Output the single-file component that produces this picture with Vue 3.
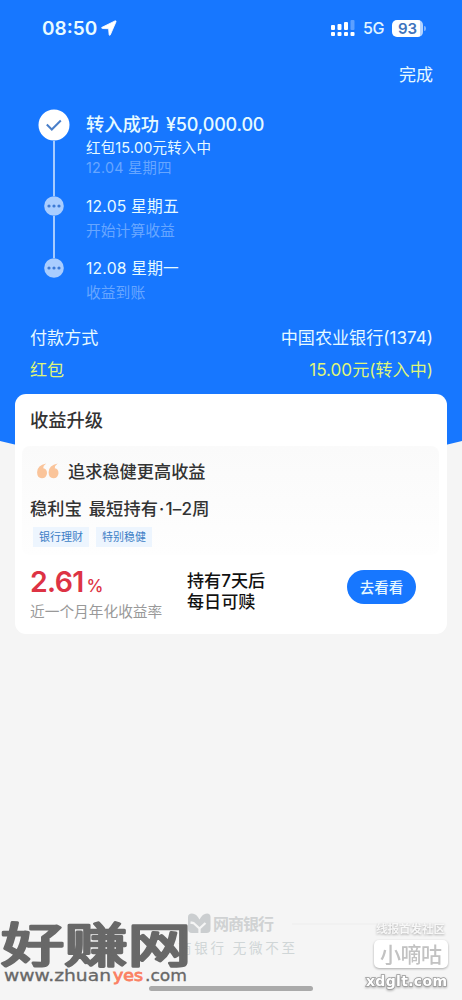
<script setup>
const steps = [
  { date: '12.05 星期五', note: '开始计算收益' },
  { date: '12.08 星期一', note: '收益到账' }
]
const tags = ['银行理财', '特别稳健']
</script>

<template>
  <main class="page">
    <section class="hero">
      <header class="status">
        <span class="time">08:50</span>
        <svg class="location" viewBox="0 0 16 16"><path d="M1 7.300 14 .9q1.300-.4 1 .9L9.300 14.900q-.8 1.100-1.200-.3L7.600 8.700 1.500 8.500Q-.1 8.100 1 7.300Z" fill="#fff" stroke="#fff" stroke-width=".8" /></svg>
        <svg class="signal" viewBox="0 0 24 17">
          <g fill="#fff">
            <rect x="0" y="5" width="4" height="5" rx="1" /><rect x="6.5" y="4" width="4" height="6" rx="1" />
            <rect x="13" y="2" width="4" height="8" rx="1" /><rect x="19.5" y="0" width="4" height="10" rx="1" opacity=".3" />
            <rect x="0" y="12" width="4" height="4" rx="1" /><rect x="6.5" y="12" width="4" height="4" rx="1" />
            <rect x="13" y="12" width="4" height="4" rx="1" /><rect x="19.5" y="12" width="4" height="4" rx="1" />
          </g>
        </svg>
        <span class="network">5G</span>
        <span class="battery">93</span>
        <i class="cap"></i>
      </header>
      <div class="done">完成</div>
      <div class="timeline">
        <div class="step first">
          <div class="rail">
            <svg class="check" viewBox="0 0 32 32"><circle cx="16" cy="16" r="15.5" fill="#fff" /><path d="m8.800 15.500 5 5 9-9" fill="none" stroke="#4a7fc9" stroke-width="2" /></svg>
            <i class="line"></i>
          </div>
          <div class="info">
            <div class="success">转入成功 <b>¥50,000.00</b></div>
            <div class="bonus">红包15.00元转入中</div>
            <div class="start">12.04 星期四</div>
          </div>
        </div>
        <div v-for="(s, i) in steps" :key="s.date" class="step">
          <div class="rail">
            <svg class="dots" viewBox="0 0 20 20"><circle cx="10" cy="10" r="9.8" fill="#a9cdff" /><g fill="#3c7ad6"><circle cx="5" cy="10" r="1.6" /><circle cx="10" cy="10" r="1.6" /><circle cx="15" cy="10" r="1.6" /></g></svg>
            <i v-if="i === 0" class="line"></i>
          </div>
          <div class="info">
            <div class="date">{{ s.date }}</div>
            <div class="note">{{ s.note }}</div>
          </div>
        </div>
      </div>
      <div class="pay"><span>付款方式</span><span class="value">中国农业银行(1374)</span></div>
      <div class="pay yellow"><span>红包</span><span class="value">15.00元(转入中)</span></div>
    </section>

    <section class="card">
      <h2>收益升级</h2>
      <div class="panel">
        <div class="quote">
          <svg viewBox="0 0 22 16"><g fill="#fac49a"><path d="M9.200.6Q6.600 2.300 6.300 5.200 10 5.700 10 10.300 9.500 15.300 4.900 15.300.1 15 .1 9.200.3 2.300 9.200.6Z" /><path d="M20.700.6Q18.100 2.300 17.800 5.200 21.500 5.700 21.500 10.300 21 15.300 16.400 15.300 11.600 15 11.600 9.200 11.800 2.300 20.700.6Z" /></g></svg>
          <span>追求稳健更高收益</span>
        </div>
        <div class="product">稳利宝 最短持有<i>·</i>1–2周</div>
        <div class="tags"><span v-for="t in tags" :key="t">{{ t }}</span></div>
      </div>
      <div class="offer">
        <div class="yield">
          <div class="rate">2.61<small>%</small></div>
          <div class="caption">近一个月年化收益率</div>
        </div>
        <div class="terms">持有7天后<br />每日可赎</div>
        <button>去看看</button>
      </div>
    </section>

    <footer>
      <svg viewBox="0 0 462 100">
        <g>
          <path d="M188 17q0-3.500 4-3.500 4.500 0 7.500 6 3-6 7.500-6 3.500 0 3.500 3.500v12q0 4-4 4h-14.500q-4 0-4-4z" fill="#cbced0" />
          <path d="m190.500 22.500 3 .5 6 5.500 6-5.500M199.500 28v6" fill="none" stroke="#f5f5f5" stroke-width="2.300" />
          <text x="213" y="30" font-size="16" font-weight="600" textLength="61" fill="#d0d2d3">网商银行</text>
          <text x="178" y="53" font-size="13.500" textLength="117" fill="#d0d6d7">商银行 无微不至</text>
          <path d="M292 24H435" stroke="#ededed" />
        </g>
        <rect x="149" y="86" width="164" height="5" rx="2.500" fill="#aaa" />
        <g fill="#686868">
          <text class="brand" transform="translate(1 61.500) scale(1 .77)" font-size="60" textLength="190" lengthAdjust="spacingAndGlyphs">好赚网</text>
          <g class="site">
            <text x="4" y="81" textLength="107" lengthAdjust="spacingAndGlyphs">www.zhuan</text>
            <text class="accent" x="113" y="81" textLength="30" lengthAdjust="spacingAndGlyphs" fill="#fb8063">yes</text>
            <text x="145" y="81" textLength="42" lengthAdjust="spacingAndGlyphs">.com</text>
          </g>
        </g>
        <g class="community">
          <text x="376" y="33" font-size="11.500" font-weight="700" textLength="69" fill="#f7f7f7">线报首发社区</text>
          <rect x="374" y="40" width="74" height="28" rx="5" fill="#fff" />
          <text x="380" y="62" font-size="21" font-weight="500" textLength="62" fill="#c2c2c2">小嘀咕</text>
          <text class="domain" x="366" y="86" textLength="81" fill="#fff">xdglt.com</text>
        </g>
      </svg>
    </footer>
  </main>
</template>

<style>
body { margin: 0; background: #f5f5f5; }
</style>
<style scoped>
* { box-sizing: border-box; }
.page { width: 462px; height: 1000px; overflow: hidden; display: flex; flex-direction: column; background: #f5f5f5; font-family: Inter, "Noto Sans CJK SC", sans-serif; color: #333; white-space: nowrap; }
.hero { height: 470px; flex: none; background: #1777ff; clip-path: path("M0 0H462V441Q231 500 0 441Z"); color: #e6faff; }
.status { height: 56px; display: flex; align-items: center; padding: 0 36px 0 42px; color: #fff; }
.time { font-size: 19px; font-weight: 600; width: 55px; color: #e9fbff; }
.location { width: 16px; height: 16px; margin-left: 4px; }
.signal { width: 24px; height: 17px; margin-left: auto; margin-right: -1px; }
.network { font-size: 16px; font-weight: 500; margin-left: 9px; width: 21px; letter-spacing: -.3px; color: #e1f5ff; }
.battery { width: 31px; height: 17px; margin-left: 8px; border-radius: 5px; background: linear-gradient(90deg, #fff 90%, #b4d4ff 90%); color: #3d73bd; font-size: 15px; font-weight: 600; line-height: 17px; text-align: center; }
.cap { width: 2px; height: 5px; margin-left: 1px; border-radius: 0 2px 2px 0; background: #7fb3ff; }
.done { height: 38px; line-height: 39px; padding-right: 29px; text-align: right; font-size: 17px; }
.timeline { padding: 15px 0 0 38px; }
.step { display: flex; height: 62.500px; }
.step.first { height: 86.500px; }
.rail { width: 32px; display: flex; flex-direction: column; align-items: center; }
.check { width: 32px; height: 32px; flex: none; }
.dots { width: 20px; height: 20px; flex: none; }
.line { width: 1.500px; flex: 1; background: #a6cbff; }
.info { margin-left: 16px; }
.success { height: 31px; line-height: 31px; font-size: 18.300px; font-weight: 500; }
.success b { font-weight: 500; font-size: 18px; margin-left: 2px; letter-spacing: -.15px; }
.bonus { height: 16px; line-height: 16px; font-size: 14.500px; letter-spacing: .15px; }
.start { height: 24px; line-height: 24px; font-size: 14.300px; letter-spacing: .25px; color: #67a6ff; }
.date { height: 22px; line-height: 22px; font-size: 15.700px; font-weight: 400; letter-spacing: .2px; }
.note { height: 26px; line-height: 27px; font-size: 14.800px; color: #67a6ff; }
.pay { height: 32px; line-height: 34px; display: flex; justify-content: space-between; padding: 0 29px 0 30px; font-size: 17.100px; }
.yellow { color: #dff57a; }
.card { position: relative; width: 432px; height: 240px; flex: none; margin: -76px 0 0 15px; border-radius: 11px; background: #fff; }
h2 { margin: 0; height: 52px; padding-left: 15px; font-size: 18.300px; font-weight: 500; line-height: 52px; }
.panel { margin: 0 8px 0 7px; height: 109px; border-radius: 8px; background: linear-gradient(#fafafa, #fefefe); }
.quote { height: 49px; display: flex; align-items: center; padding-left: 15px; font-size: 17.200px; font-weight: 500; }
.quote svg { width: 22px; height: 16px; margin-right: 9px; }
.product { height: 27px; line-height: 27px; padding-left: 8px; font-size: 17.200px; font-weight: 500; word-spacing: 2px; letter-spacing: .15px; }
.product i { font-style: normal; margin: 0 1px; }
.tags { display: flex; gap: 7px; padding: 5px 0 0 11px; }
.tags span { width: 56px; height: 20px; background: #edf5fe; color: #3e7fc6; text-align: center; line-height: 20px; font-size: 11px; }
.offer { height: 79px; display: flex; padding-left: 15px; }
.yield { width: 157px; padding-top: 8px; }
.rate { height: 36px; line-height: 37px; color: #dd3344; font-size: 28.500px; font-weight: 600; letter-spacing: -.7px; }
.rate small { font-size: 17px; font-weight: 500; margin-left: 3px; }
.caption { height: 26px; line-height: 27px; font-size: 14.700px; color: #999; }
.terms { padding-top: 15px; line-height: 21px; font-size: 17.100px; font-weight: 500; color: #111; }
button { width: 69px; height: 34px; margin: 15px 31px 0 auto; padding: 0; border: 0; border-radius: 17px; background: #1777ff; color: #e5f7ff; font: 500 14.500px/34px "Noto Sans CJK SC", sans-serif; }
footer { height: 100px; margin-top: auto; }
footer svg { display: block; width: 462px; height: 100px; }
footer text { font-family: "Noto Sans CJK SC", sans-serif; }
.brand { font-weight: 400; stroke: #686868; stroke-width: 3.500px; stroke-linejoin: round; }
.site text { font-family: "DejaVu Sans", sans-serif; font-size: 15px; stroke: #686868; stroke-width: .3px; }
.site .accent { stroke: #fb8063; stroke-width: .8px; }
.community { filter: drop-shadow(0 1px 1px #aaa); }
.domain { font-family: "DejaVu Sans", sans-serif; font-size: 14px; font-weight: 700; stroke: #999; stroke-width: 1.500px; paint-order: stroke; }
</style>
